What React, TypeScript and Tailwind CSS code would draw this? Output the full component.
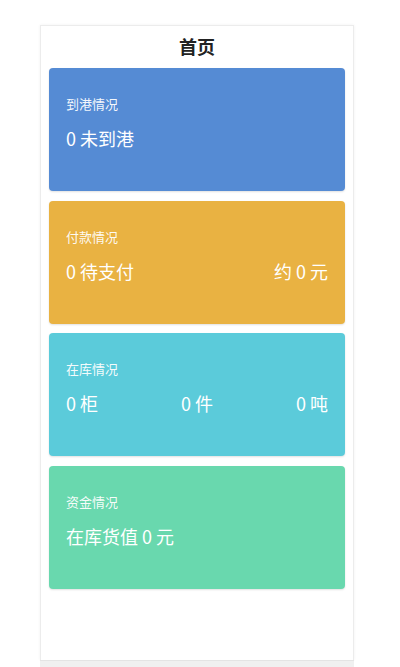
import React from "react";

type Card = {
  title: string;
  bg: string;
  values: string[];
};

const cards: Card[] = [
  { title: "到港情况", bg: "bg-[#558bd4]", values: ["0 未到港"] },
  { title: "付款情况", bg: "bg-[#e9b242]", values: ["0 待支付", "约 0 元"] },
  { title: "在库情况", bg: "bg-[#5bcbda]", values: ["0 柜", "0 件", "0 吨"] },
  { title: "资金情况", bg: "bg-[#69d8ae]", values: ["在库货值 0 元"] },
];

const StatCard = ({ card }: { card: Card }) => (
  <div
    className={`h-[123px] rounded-[4px] px-[17px] pt-[28px] text-white shadow-[0_1px_2px_rgba(0,0,0,0.12)] ${card.bg}`}
  >
    <div className="text-[13px] leading-[16px] text-white/95">{card.title}</div>
    <div className="mt-[14px] flex justify-between text-[18px] leading-[24px]">
      {card.values.map((v) => (
        <span key={v} className="whitespace-pre">
          {v}
        </span>
      ))}
    </div>
  </div>
);

const App = () => {
  return (
    <div
      className="h-[667px] w-[400px] overflow-hidden bg-white pt-[25px]"
      style={{ fontFamily: '"Noto Sans CJK SC", "Noto Sans", sans-serif' }}
    >
      <div className="ml-[40px] flex h-[635px] w-[314px] flex-col border-x border-t border-[#ececec] shadow-[0_0_3px_rgba(0,0,0,0.06)]">
        <div className="h-[42px] pt-[8px] text-center text-[18px] font-bold leading-[24px] text-[#222]">
          首页
        </div>
        <div className="flex flex-col gap-[9.5px] px-[8px]">
          {cards.map((c) => (
            <StatCard key={c.title} card={c} />
          ))}
        </div>
      </div>
      <div className="ml-[40px] h-[7px] w-[314px] border-t border-[#e4e4e4] bg-[#f0f0f0]" />
    </div>
  );
};

export default App;
